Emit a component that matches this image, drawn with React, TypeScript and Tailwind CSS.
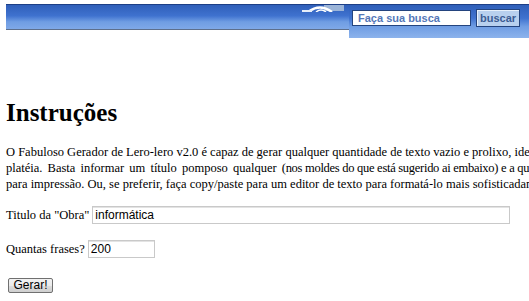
export default function App() {
  return (
    <div className="w-[529px] h-[301px] overflow-hidden bg-white font-['Liberation_Serif',serif] text-black">
      {/* topo */}
      <div className="flex items-start pt-[4px] pl-[6px]">
        <div className="relative w-[343px] h-[26px] border-t border-[#1d3f86] bg-[linear-gradient(to_bottom,#2f5fb9_0%,#3f72cf_45%,#6f9de3_70%,#7fa9e8_100%)] border-b border-b-[#5d6f8c]">
          <svg className="absolute left-[296px] top-0" width="42" height="7" viewBox="0 0 42 7">
            <rect x="22" y="0" width="20" height="6" fill="#9bb4d8" />
            <path d="M6 7 Q18 -2 30 7" stroke="#fff" strokeWidth="2.5" fill="none" />
            <path d="M14 7 Q19 3 24 7" stroke="#fff" strokeWidth="1.5" fill="none" />
            <rect x="0" y="5" width="10" height="2" fill="#e6eef9" />
          </svg>
        </div>
        <div className="flex-1 h-[34px] border-t border-[#1d3f86] bg-[linear-gradient(to_bottom,#2f5fb9_0%,#3f72cf_40%,#6f9de3_65%,#8cb3ec_100%)] flex items-start pt-[5px] pl-[3px]">
          <div className="w-[119px] h-[16px] bg-white border border-[#24447e] flex items-center pl-[5px] font-['Liberation_Sans',sans-serif] text-[11px] font-bold text-[#5477b8]">
            Faça sua busca
          </div>
          <button className="ml-[5px] mt-[-1px] w-[44px] h-[18px] bg-[#b8d0ee] border border-[#24447e] shadow-[inset_1px_1px_0_#e6f0fb] font-['Liberation_Sans',sans-serif] text-[11px] font-bold text-[#3c5c93] leading-none">
            buscar
          </button>
        </div>
      </div>

      <h1 className="mt-[60px] ml-[6px] text-[25px] font-bold leading-[30px]">Instruções</h1>

      <div className="mt-[16px] ml-[6px] text-[12.5px] leading-[16px] whitespace-nowrap">
        <p>O Fabuloso Gerador de Lero-lero v2.0 é capaz de gerar qualquer quantidade de texto vazio e prolixo, ideal para engrossar uma tese de mestrado</p>
        <p>
          <span className="[word-spacing:2px]">platéia. Basta informar um título pomposo qualquer </span>
          <span className="tracking-[-0.28px]">(nos moldes do que está sugerido ai embaixo) e a quantidade de frases desejada.</span>
        </p>
        <p>para impressão. Ou, se preferir, faça copy/paste para um editor de texto para formatá-lo mais sofisticadamente.</p>
      </div>

      <div className="mt-[14px] ml-[6px] flex items-center text-[12.5px]">
        <span>Titulo da "Obra"</span>
        <input
          defaultValue="informática"
          className="ml-[3px] w-[418px] h-[18px] border border-[#c9c9c9] shadow-[inset_0_1px_0_#e3e3e3] px-[2px] font-['Liberation_Sans',sans-serif] text-[12px] outline-none"
        />
      </div>

      <div className="mt-[15px] ml-[6px] flex items-center text-[12.5px]">
        <span>Quantas frases?</span>
        <input
          defaultValue="200"
          className="ml-[3px] w-[67px] h-[18px] border border-[#c9c9c9] shadow-[inset_0_1px_0_#e3e3e3] px-[2px] font-['Liberation_Sans',sans-serif] text-[12px] outline-none"
        />
      </div>

      <button className="block mt-[19px] ml-[8px] w-[45px] h-[15px] rounded-[2px] border border-[#707070] bg-[linear-gradient(to_bottom,#f2f2f2_0%,#ebebeb_50%,#dddddd_51%,#cfcfcf_100%)] font-['Liberation_Sans',sans-serif] text-[12px] leading-none">
        Gerar!
      </button>
    </div>
  )
}
